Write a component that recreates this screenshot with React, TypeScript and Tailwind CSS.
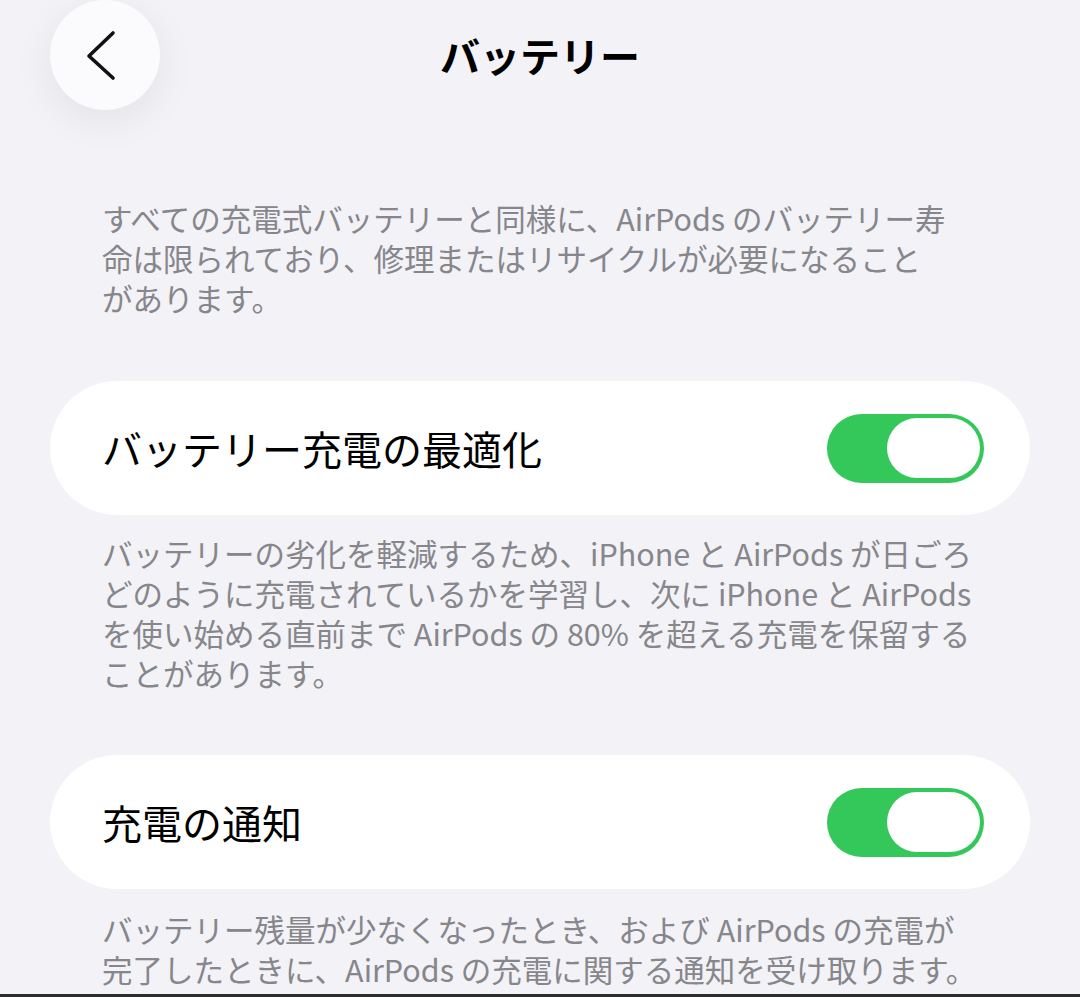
import React, { useState } from "react";

const font = { fontFamily: '"Noto Sans CJK JP", "Noto Sans", sans-serif' };

function Toggle({ on, onClick }: any) {
  return (
    <button
      onClick={onClick}
      className={`w-[157px] h-[69px] rounded-full p-[4px] flex items-center shrink-0 ${on ? "bg-[#34c759] justify-end" : "bg-[#e9e9eb] justify-start"}`}
    >
      <span className="block w-[93px] h-[60px] rounded-full bg-white" />
    </button>
  );
}

function Row({ label, on, onClick }: any) {
  return (
    <div className="mx-[50px] h-[134px] rounded-full bg-white flex items-center justify-between pl-[52px] pr-[46px]">
      <span className="text-[40px] leading-none text-black">{label}</span>
      <Toggle on={on} onClick={onClick} />
    </div>
  );
}

function Note({ lines, className }: any) {
  return (
    <p className={`px-[102px] text-[30.5px] leading-[40px] text-[#86868b] whitespace-nowrap ${className || ""}`}>
      {lines.map((l: string, i: number) => (
        <span key={i} className="block">{l}</span>
      ))}
    </p>
  );
}

export default function App() {
  const [optimize, setOptimize] = useState(true);
  const [notify, setNotify] = useState(true);

  return (
    <div style={font} className="w-[1080px] h-[997px] bg-[#f2f2f7] overflow-hidden flex flex-col">
      <div className="relative h-[110px] flex items-center justify-center shrink-0">
        <button className="absolute left-[50px] top-0 w-[110px] h-[110px] rounded-full bg-[#fbfbfd] shadow-[0_10px_40px_rgba(0,0,0,0.07)] flex items-center justify-center">
          <svg width="110" height="110" viewBox="0 0 110 110" fill="none">
            <path d="M63 33 L39 56 L63 78" stroke="#111" strokeWidth="3.6" strokeLinecap="round" strokeLinejoin="round" />
          </svg>
        </button>
        <h1 className="text-[40px] font-bold leading-none text-black">バッテリー</h1>
      </div>

      <Note
        className="mt-[88px]"
        lines={[
          "すべての充電式バッテリーと同様に、AirPods のバッテリー寿",
          "命は限られており、修理またはリサイクルが必要になること",
          "があります。",
        ]}
      />

      <div className="mt-[63px]">
        <Row label="バッテリー充電の最適化" on={optimize} onClick={() => setOptimize(v => !v)} />
      </div>

      <Note
        className="mt-[18px]"
        lines={[
          "バッテリーの劣化を軽減するため、iPhone と AirPods が日ごろ",
          "どのように充電されているかを学習し、次に iPhone と AirPods",
          "を使い始める直前まで AirPods の 80% を超える充電を保留する",
          "ことがあります。",
        ]}
      />

      <div className="mt-[62px]">
        <Row label="充電の通知" on={notify} onClick={() => setNotify(v => !v)} />
      </div>

      <Note
        className="mt-[20px] leading-[39px]"
        lines={[
          "バッテリー残量が少なくなったとき、および AirPods の充電が",
          "完了したときに、AirPods の充電に関する通知を受け取ります。",
        ]}
      />

      <div className="flex-1" />
      <div className="h-[3px] bg-[#2c2c2e] shrink-0" />
    </div>
  );
}
